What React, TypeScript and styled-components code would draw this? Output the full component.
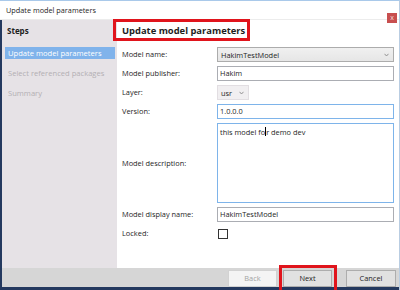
import React from 'react';
import styled, { createGlobalStyle } from 'styled-components';

const GlobalStyle = createGlobalStyle`
  html, body {
    margin: 0;
    padding: 0;
    background: #ffffff;
  }
  body {
    font-family: 'Open Sans', 'Noto Sans', sans-serif;
    font-size: 7.4px;
    color: #1e1e1e;
  }
`;

const Window = styled.div`
  position: relative;
  width: 400px;
  height: 290px;
  display: flex;
  flex-direction: column;
  box-sizing: border-box;
  border-top: 1px solid #a9c9ea;
  border-right: 1px solid #b9cde2;
  overflow: hidden;
`;

const TitleBar = styled.div`
  height: 18px;
  display: flex;
  align-items: flex-start;
  justify-content: space-between;
  padding-left: 6px;
  border-bottom: 1px solid #ececec;
  background: #ffffff;
`;

const TitleText = styled.div`
  line-height: 18px;
  font-size: 7.3px;
`;

const CloseButton = styled.div`
  position: relative;
  z-index: 2;
  width: 10px;
  height: 10px;
  margin-top: 12px;
  margin-right: 2px;
  background: #c84f4f;
  color: #f4dede;
  font-size: 7px;
  line-height: 10px;
  text-align: center;
`;

const Body = styled.div`
  flex: 1;
  display: flex;
  border-left: 2px solid #24395f;
`;

const Sidebar = styled.div`
  width: 115px;
  background: #e6e2e6;
  padding-top: 4px;
`;

const SideHeading = styled.div`
  font-weight: 700;
  font-size: 8px;
  padding-left: 5px;
  line-height: 13px;
`;

const StepList = styled.div`
  margin-top: 10px;
  display: flex;
  flex-direction: column;
  gap: 8px;
  padding: 0 2px 0 3px;
`;

const Step = styled.div<{ $active?: boolean }>`
  height: 12px;
  line-height: 12px;
  padding-left: 3px;
  font-size: 7.6px;
  background: ${({ $active }) => ($active ? '#80b3eb' : 'transparent')};
  color: ${({ $active }) => ($active ? '#ffffff' : '#b3afb3')};
`;

const Main = styled.div`
  flex: 1;
  padding: 4px 4px 0 5px;
`;

const Heading = styled.div`
  font-weight: 700;
  font-size: 9.4px;
  line-height: 13px;
`;

const Form = styled.div`
  margin-top: 10px;
  display: grid;
  grid-template-columns: 95px 177px;
  row-gap: 4px;
  align-items: center;
`;

const Label = styled.div`
  line-height: 15px;
`;

const Select = styled.div<{ $disabled?: boolean; $width?: string }>`
  box-sizing: border-box;
  width: ${({ $width }) => $width || '100%'};
  height: 15px;
  display: flex;
  align-items: center;
  justify-content: space-between;
  padding: 0 4px 0 3px;
  border: 1px solid ${({ $disabled }) => ($disabled ? '#e2dee2' : '#acacac')};
  background: ${({ $disabled }) =>
    $disabled ? '#f1eff1' : 'linear-gradient(#f0f0f0, #e6e6e6)'};
`;

const Chevron = styled.svg`
  width: 5px;
  height: 4px;
`;

const Input = styled.div<{ $focus?: boolean }>`
  box-sizing: border-box;
  height: 15px;
  line-height: 13px;
  padding-left: 2px;
  border: 1px solid ${({ $focus }) => ($focus ? '#7eb4ea' : '#abadb3')};
  background: #ffffff;
`;

const TextArea = styled(Input)`
  height: 80px;
  padding-top: 2px;
`;

const Caret = styled.span`
  display: inline-block;
  width: 0;
  height: 9px;
  border-left: 1px solid #000;
  vertical-align: -1px;
`;

const CheckBox = styled.div`
  box-sizing: border-box;
  width: 10px;
  height: 10px;
  margin-left: 1px;
  border: 1px solid #333333;
  background: #ffffff;
`;

const Footer = styled.div`
  height: 19px;
  display: flex;
  align-items: flex-end;
  justify-content: flex-end;
  padding-right: 3px;
  background: #d6d6d6;
  border-left: 2px solid #24395f;
  border-bottom: 3px solid #24395f;
`;

const Button = styled.div<{ $disabled?: boolean; $gap?: number; $width?: number }>`
  box-sizing: border-box;
  width: ${({ $width }) => $width ?? 49}px;
  height: 17px;
  margin-left: ${({ $gap }) => $gap ?? 0}px;
  line-height: 15px;
  text-align: center;
  border: 1px solid ${({ $disabled }) => ($disabled ? '#d2d2d2' : '#adadad')};
  background: ${({ $disabled }) => ($disabled ? '#f4f4f4' : '#e1e1e1')};
  color: ${({ $disabled }) => ($disabled ? '#a3a3a3' : '#1e1e1e')};
`;

const Annotation = styled.div<{ $x: number; $y: number; $w: number; $h: number }>`
  position: absolute;
  left: ${({ $x }) => $x}px;
  top: ${({ $y }) => $y}px;
  width: ${({ $w }) => $w}px;
  height: ${({ $h }) => $h}px;
  box-sizing: border-box;
  border: 3px solid #e0141c;
  pointer-events: none;
`;

const chevron = (
  <Chevron viewBox="0 0 5 4">
    <path d="M0.5 0.8 L2.5 3 L4.5 0.8" fill="none" stroke="#8a8a8a" strokeWidth="0.9" />
  </Chevron>
);

export default function App() {
  return (
    <>
      <GlobalStyle />
      <Window>
        <TitleBar>
          <TitleText>Update model parameters</TitleText>
          <CloseButton>x</CloseButton>
        </TitleBar>
        <Body>
          <Sidebar>
            <SideHeading>Steps</SideHeading>
            <StepList>
              <Step $active>Update model parameters</Step>
              <Step>Select referenced packages</Step>
              <Step>Summary</Step>
            </StepList>
          </Sidebar>
          <Main>
            <Heading>Update model parameters</Heading>
            <Form>
              <Label>Model name:</Label>
              <Select>
                <span>HakimTestModel</span>
                {chevron}
              </Select>
              <Label>Model publisher:</Label>
              <Input>Hakim</Input>
              <Label>Layer:</Label>
              <Select $disabled $width="32px">
                <span>usr</span>
                {chevron}
              </Select>
              <Label>Version:</Label>
              <Input $focus>1.0.0.0</Input>
              <Label>Model description:</Label>
              <TextArea $focus>
                this model fo<Caret />r demo dev
              </TextArea>
              <Label>Model display name:</Label>
              <Input>HakimTestModel</Input>
              <Label>Locked:</Label>
              <CheckBox />
            </Form>
          </Main>
        </Body>
        <Footer>
          <Button $disabled>Back</Button>
          <Button $gap={6}>Next</Button>
          <Button $gap={14} $width={50}>Cancel</Button>
        </Footer>
        <Annotation $x={113} $y={18} $w={137} $h={22} />
        <Annotation $x={279} $y={264} $w={58} $h={30} />
      </Window>
    </>
  );
}
